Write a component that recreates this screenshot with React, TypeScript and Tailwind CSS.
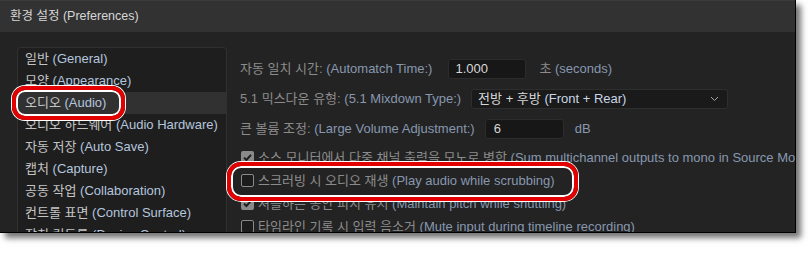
import React from "react";

const FONT = { fontFamily: '"Liberation Sans", "Noto Sans CJK KR", sans-serif' };

function Bi({ ko, en, koC, enC }: { ko: string; en: string; koC: string; enC: string }) {
  return (
    <span className="whitespace-nowrap">
      <span className={koC}>{ko}</span> <span className={enC}>{en}</span>
    </span>
  );
}

function Check({ checked }: { checked: boolean }) {
  return checked ? (
    <span className="w-[13px] h-[13px] rounded-[2px] bg-[#8a8a8a] flex items-center justify-center shrink-0">
      <svg width="11" height="11" viewBox="0 0 11 11">
        <path d="M2 5.6 L4.4 8 L9 2.8" fill="none" stroke="#1e1e1e" strokeWidth="2" />
      </svg>
    </span>
  ) : (
    <span className="w-[13px] h-[13px] rounded-[2px] border-[1.5px] border-[#8a8a8a] bg-[#1c1c1c] shrink-0" />
  );
}

const listItems: [string, string][] = [
  ["일반", "(General)"],
  ["모양", "(Appearance)"],
  ["오디오", "(Audio)"],
  ["오디오 하드웨어", "(Audio Hardware)"],
  ["자동 저장", "(Auto Save)"],
  ["캡처", "(Capture)"],
  ["공동 작업", "(Collaboration)"],
  ["컨트롤 표면", "(Control Surface)"],
  ["장치 컨트롤", "(Device Control)"],
];

const checks: [boolean, string, string][] = [
  [true, "소스 모니터에서 다중 채널 출력을 모노로 병합", "(Sum multichannel outputs to mono in Source Monitor)"],
  [false, "스크러빙 시 오디오 재생", "(Play audio while scrubbing)"],
  [true, "셔틀하는 동안 피치 유지", "(Maintain pitch while shuttling)"],
  [false, "타임라인 기록 시 입력 음소거", "(Mute input during timeline recording)"],
];

export default function App() {
  return (
    <div className="w-[808px] h-[255px] bg-white relative overflow-hidden" style={FONT}>
      <div className="w-[796px] h-[233px] bg-[#232323] border-r border-b border-black shadow-[5px_5px_6px_rgba(0,0,0,0.55)] flex flex-col overflow-hidden">
        <div className="h-[32px] shrink-0 bg-[#323232] border-t border-[#3c3c3c] flex items-center pl-[10px] text-[12.5px] text-[#d6d6d6]">
          환경 설정 (Preferences)
        </div>
        <div className="flex flex-1 min-h-0">
          <div className="ml-[17px] mt-[15px] w-[210px] shrink-0 rounded-t-[4px] border border-b-0 border-[#303030] bg-[#1e1e1e] text-[13px]">
            {listItems.map(([ko, en], i) => (
              <div
                key={i}
                className={`h-[22px] flex items-center pl-[7px] ${i === 2 ? "bg-[#313131]" : ""}`}
              >
                <Bi ko={ko} en={en} koC="text-[#c4c4c4]" enC="text-[#b4c6de]" />
              </div>
            ))}
          </div>
          <div className="flex-1 min-w-0 pl-[13px] pt-[27px] flex flex-col text-[13px] overflow-hidden">
            <div className="h-[20px] flex items-center">
              <Bi ko="자동 일치 시간:" en="(Automatch Time:)" koC="text-[#8c8c8c]" enC="text-[#8798b0]" />
              <div className="ml-[16px] w-[78px] h-[20px] bg-[#171717] border border-[#2c2c2c] rounded-[3px] flex items-center pl-[6px] text-[#d8d8d8]">
                1.000
              </div>
              <span className="ml-[13px]">
                <Bi ko="초" en="(seconds)" koC="text-[#8c8c8c]" enC="text-[#8798b0]" />
              </span>
            </div>
            <div className="h-[20px] mt-[10px] flex items-center">
              <Bi ko="5.1 믹스다운 유형:" en="(5.1 Mixdown Type:)" koC="text-[#8c8c8c]" enC="text-[#8798b0]" />
              <div className="ml-[10px] w-[257px] h-[20px] bg-[#1a1a1a] border border-[#2e2e2e] rounded-[3px] flex items-center pl-[6px] pr-[8px] text-[#d8d8d8]">
                <span className="flex-1 whitespace-nowrap">
                  전방 + 후방 <span className="text-[#c9d6e8]">(Front + Rear)</span>
                </span>
                <svg width="9" height="6" viewBox="0 0 9 6">
                  <path d="M1 1 L4.5 4.5 L8 1" fill="none" stroke="#a8a8a8" strokeWidth="1" />
                </svg>
              </div>
            </div>
            <div className="h-[20px] mt-[10px] flex items-center">
              <Bi ko="큰 볼륨 조정:" en="(Large Volume Adjustment:)" koC="text-[#8c8c8c]" enC="text-[#8798b0]" />
              <div className="ml-[10px] w-[79px] h-[20px] bg-[#171717] border border-[#2c2c2c] rounded-[3px] flex items-center pl-[8px] text-[#d8d8d8]">
                6
              </div>
              <span className="ml-[11px] text-[#8798b0]">dB</span>
            </div>
            <div className="mt-[7px] flex flex-col">
              {checks.map(([c, ko, en], i) => (
                <div key={i} className="h-[23px] flex items-center pl-[1px] gap-[4px]">
                  <Check checked={c} />
                  <Bi ko={ko} en={en} koC="text-[#8c8c8c]" enC="text-[#8798b0]" />
                </div>
              ))}
            </div>
          </div>
        </div>
      </div>
      <div className="absolute left-[12px] top-[86px] w-[113px] h-[34px] rounded-[13px] border-[4px] border-[#e30000] shadow-[inset_0_0_0_2px_#ffffff,0_0_0_1px_#ffffff]" />
      <div className="absolute left-[227px] top-[162px] w-[351px] h-[39px] rounded-[14px] border-[4px] border-[#e30000] shadow-[inset_0_0_0_2px_#ffffff,0_0_0_1px_#ffffff]" />
    </div>
  );
}
